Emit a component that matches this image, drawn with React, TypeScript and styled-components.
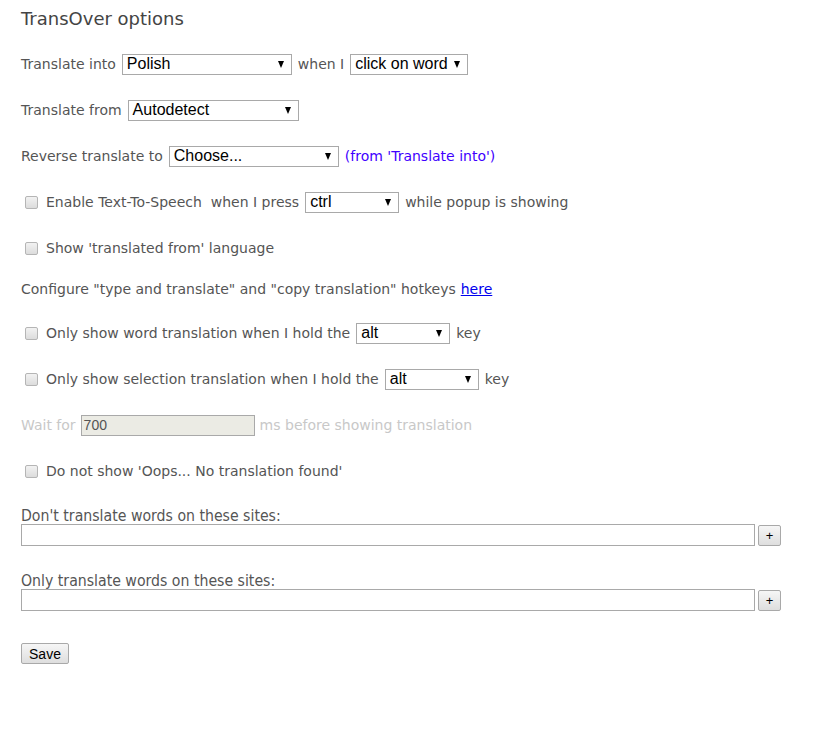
import React from "react";
import styled, { createGlobalStyle } from "styled-components";

const Global = createGlobalStyle`
  html, body { margin: 0; padding: 0; background: #fff; }
  body {
    font-family: "DejaVu Sans", Verdana, sans-serif;
    font-size: 14px;
    color: #555;
  }
`;

const Page = styled.div`
  padding: 7px 21px 40px 21px;
`;

const Title = styled.h1`
  margin: 0 0 20px 0;
  font-size: 18px;
  font-weight: normal;
  color: #444;
  height: 24px;
  line-height: 24px;
`;

const Row = styled.div<{ $indent?: boolean; $after?: number; $muted?: boolean }>`
  display: flex;
  align-items: center;
  height: 26px;
  margin-bottom: ${(p) => (p.$after ?? 20)}px;
  padding-left: ${(p) => (p.$indent ? 4 : 0)}px;
  white-space: nowrap;
  color: ${(p) => (p.$muted ? "#c8c8c8" : "#555")};
`;

const Label = styled.span<{ $ml?: number; $mr?: number }>`
  margin-left: ${(p) => p.$ml ?? 0}px;
  margin-right: ${(p) => p.$mr ?? 0}px;
`;

const Check = styled.span`
  display: inline-block;
  width: 11px;
  height: 11px;
  border: 1px solid #b5b5b5;
  border-radius: 2px;
  background: linear-gradient(#f2f2f2, #dcdcdc);
  margin-right: 8px;
  box-sizing: content-box;
`;

const SelectBox = styled.div<{ $w?: number }>`
  display: inline-flex;
  align-items: center;
  justify-content: space-between;
  box-sizing: border-box;
  height: 21px;
  width: ${(p) => (p.$w ? `${p.$w}px` : "auto")};
  border: 1px solid #a9a9a9;
  background: #fff;
  padding: 0 7px 0 4px;
  font-family: "Liberation Sans", Arial, sans-serif;
  font-size: 16px;
  color: #000;
  margin: 0 6px 0 6px;
`;

const Arrow = styled.span<{ $gap?: number }>`
  display: inline-block;
  width: 0;
  height: 0;
  border-left: 3.5px solid transparent;
  border-right: 3.5px solid transparent;
  border-top: 7px solid #000;
  margin-left: ${(p) => p.$gap ?? 0}px;
`;

const Hint = styled.span`
  color: #3f00ff;
`;

const Link = styled.a`
  color: #0000ee;
  text-decoration: underline;
  margin-left: 5px;
  cursor: pointer;
`;

const WaitInput = styled.div`
  box-sizing: border-box;
  width: 174px;
  height: 21px;
  margin: 0 5px 0 5px;
  border: 1px solid #a9a9a9;
  background: #ebebe4;
  color: #545454;
  font-family: "Liberation Sans", Arial, sans-serif;
  font-size: 14px;
  line-height: 19px;
  padding-left: 2px;
`;

const SitesBlock = styled.div<{ $after: number }>`
  margin-bottom: ${(p) => p.$after}px;
`;

const SitesLabel = styled.div`
  font-family: "DejaVu Sans Condensed", "DejaVu Sans", sans-serif;
  font-size: 15.7px;
  color: #555;
  height: 17px;
  line-height: 17px;
`;

const SitesRow = styled.div`
  display: flex;
  align-items: center;
  gap: 3px;
`;

const SitesInput = styled.div`
  box-sizing: border-box;
  flex: 0 0 734px;
  height: 22px;
  border: 1px solid #a9a9a9;
  background: #fff;
`;

const PlusButton = styled.div`
  box-sizing: border-box;
  flex: 0 0 23px;
  height: 21px;
  border: 1px solid #a9a9a9;
  border-radius: 2px;
  background: linear-gradient(#f6f6f6, #dedede);
  color: #000;
  font-family: "Liberation Sans", Arial, sans-serif;
  font-size: 13px;
  display: flex;
  align-items: center;
  justify-content: center;
`;

const SaveButton = styled.div`
  box-sizing: border-box;
  display: inline-flex;
  align-items: center;
  justify-content: center;
  width: 48px;
  height: 21px;
  border: 1px solid #a9a9a9;
  border-radius: 2px;
  background: linear-gradient(#f6f6f6, #dedede);
  color: #000;
  font-family: "Liberation Sans", Arial, sans-serif;
  font-size: 14px;
`;

const Select = ({ value, w }: { value: string; w?: number }) => (
  <SelectBox $w={w}>
    <span>{value}</span>
    <Arrow $gap={w ? 0 : 6} />
  </SelectBox>
);

export default function App() {
  return (
    <>
      <Global />
      <Page>
        <Title>TransOver options</Title>
        <Row>
          <Label>Translate into</Label>
          <Select value="Polish" w={170} />
          <Label>when I</Label>
          <Select value="click on word" />
        </Row>
        <Row>
          <Label>Translate from</Label>
          <Select value="Autodetect" w={171} />
        </Row>
        <Row>
          <Label>Reverse translate to</Label>
          <Select value="Choose..." w={170} />
          <Hint>(from 'Translate into')</Hint>
        </Row>
        <Row $indent>
          <Check />
          <Label>Enable Text-To-Speech&nbsp; when I press</Label>
          <Select value="ctrl" w={94} />
          <Label>while popup is showing</Label>
        </Row>
        <Row $indent $after={15}>
          <Check />
          <Label>Show 'translated from' language</Label>
        </Row>
        <Row $after={18}>
          <Label>Configure "type and translate" and "copy translation" hotkeys</Label>
          <Link>here</Link>
        </Row>
        <Row $indent>
          <Check />
          <Label>Only show word translation when I hold the</Label>
          <Select value="alt" w={94} />
          <Label>key</Label>
        </Row>
        <Row $indent>
          <Check />
          <Label>Only show selection translation when I hold the</Label>
          <Select value="alt" w={94} />
          <Label>key</Label>
        </Row>
        <Row $muted>
          <Label>Wait for</Label>
          <WaitInput>700</WaitInput>
          <Label>ms before showing translation</Label>
        </Row>
        <Row $indent $after={23}>
          <Check />
          <Label>Do not show 'Oops... No translation found'</Label>
        </Row>
        <SitesBlock $after={26}>
          <SitesLabel>Don't translate words on these sites:</SitesLabel>
          <SitesRow>
            <SitesInput />
            <PlusButton>+</PlusButton>
          </SitesRow>
        </SitesBlock>
        <SitesBlock $after={32}>
          <SitesLabel>Only translate words on these sites:</SitesLabel>
          <SitesRow>
            <SitesInput />
            <PlusButton>+</PlusButton>
          </SitesRow>
        </SitesBlock>
        <SaveButton>Save</SaveButton>
      </Page>
    </>
  );
}
